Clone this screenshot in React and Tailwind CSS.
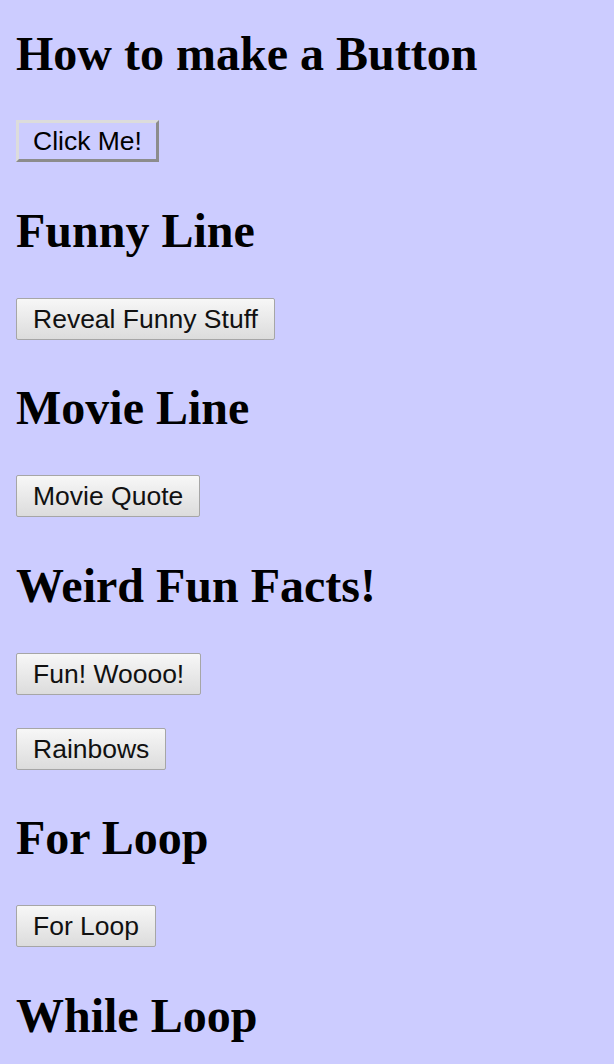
import React from "react";

const Heading = ({ children, first }) => (
  <h1
    className={`font-['Liberation_Serif',serif] text-[48px] font-bold leading-[53px] text-black ${
      first ? "mt-[27px]" : "mt-[41.5px]"
    }`}
  >
    {children}
  </h1>
);

const PlainButton = ({ label, gap = "mt-[41px]" }) => (
  <div className={gap}>
    <button className="rounded-[2px] border border-[#a6a6a6] bg-gradient-to-b from-[#f7f7f7] to-[#dcdcdc] px-4 py-[5px] font-['Liberation_Sans',Arial,sans-serif] text-[26.5px] leading-[30px] text-[#111]">
      {label}
    </button>
  </div>
);

export default function App() {
  return (
    <div className="min-h-[1064px] bg-[#ccccff] px-4 pb-8">
      <div className="flow-root">
        <Heading first>How to make a Button</Heading>
        <div className="mt-[40px]">
          <button className="border-[3px] border-t-[#dcdcdc] border-l-[#dcdcdc] border-b-[#8c8c8c] border-r-[#8c8c8c] bg-[#ccccff] px-[14px] py-[3px] font-['Liberation_Sans',Arial,sans-serif] text-[26.5px] leading-[30px] text-black">
            Click Me!
          </button>
        </div>

        <Heading>Funny Line</Heading>
        <PlainButton label="Reveal Funny Stuff" />

        <Heading>Movie Line</Heading>
        <PlainButton label="Movie Quote" />

        <Heading>Weird Fun Facts!</Heading>
        <PlainButton label="Fun! Woooo!" />
        <PlainButton label="Rainbows" gap="mt-[33px]" />

        <Heading>For Loop</Heading>
        <PlainButton label="For Loop" />

        <Heading>While Loop</Heading>
      </div>
    </div>
  );
}
